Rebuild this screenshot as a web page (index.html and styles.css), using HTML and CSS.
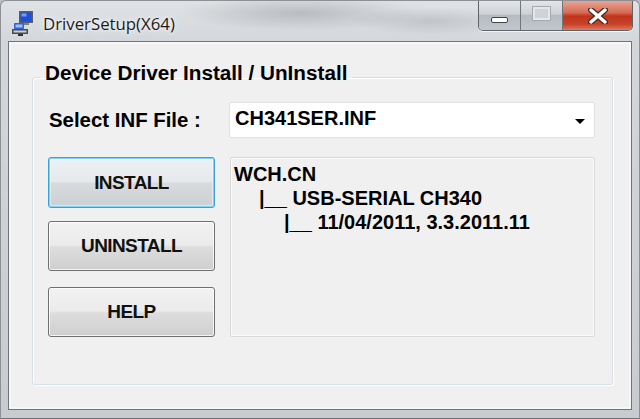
FILE: index.html
```html
<!DOCTYPE html>
<html>
<head>
<meta charset="utf-8">
<title>DriverSetup(X64)</title>
<link rel="stylesheet" href="styles.css">
</head>
<body>
<div class="window">
  <div class="titlebar">
    <svg class="app-icon" width="24" height="26" viewBox="0 0 24 26">
      <rect x="8" y="1" width="14" height="12" fill="#5a5f66"/>
      <rect x="9.5" y="2.5" width="11" height="9" fill="#1f4fd6"/>
      <rect x="10.5" y="3.5" width="5" height="3" fill="#6f9cff"/>
      <rect x="12" y="13" width="6" height="2" fill="#7a7f86"/>
      <rect x="3" y="13" width="10" height="6" rx="1" fill="#2a63d8"/>
      <rect x="4.5" y="14.5" width="7" height="3" fill="#9cc0ff"/>
      <rect x="1" y="19" width="16" height="5" fill="#474b52"/>
      <rect x="2.5" y="20.5" width="13" height="2" fill="#c9ccd1"/>
      <rect x="7" y="24" width="5" height="2" fill="#2d3036"/>
    </svg>
    <span class="title">DriverSetup(X64)</span>
    <div class="caption-buttons">
      <div class="cbtn cmin"><span class="min-glyph"></span></div>
      <div class="cbtn cmax"><span class="max-glyph"></span></div>
      <div class="cbtn cclose">
        <svg width="22" height="16" viewBox="0 0 22 16">
          <path d="M4 2 L18 14 M18 2 L4 14" stroke="#4a2a24" stroke-width="6" stroke-linecap="round"/>
          <path d="M4 2 L18 14 M18 2 L4 14" stroke="#ffffff" stroke-width="3.4" stroke-linecap="round"/>
        </svg>
      </div>
    </div>
  </div>
  <div class="client">
    <fieldset class="group">
      <legend class="group-title">Device Driver Install / UnInstall</legend>
      <div class="inf-row">
        <span class="inf-label">Select INF File :</span>
        <div class="combo">
          <span class="combo-text">CH341SER.INF</span>
          <span class="combo-arrow"></span>
        </div>
      </div>
      <div class="main-row">
        <div class="buttons">
          <div class="btn btn-default">INSTALL</div>
          <div class="btn btn-uninstall">UNINSTALL</div>
          <div class="btn btn-help">HELP</div>
        </div>
        <div class="info">
          <div class="line">WCH.CN</div>
          <div class="line lvl1">|__ USB-SERIAL CH340</div>
          <div class="line lvl2">|__ 11/04/2011, 3.3.2011.11</div>
        </div>
      </div>
    </fieldset>
  </div>
</div>
</body>
</html>
```

FILE: styles.css
```css
html, body {
  margin: 0;
  padding: 0;
  width: 640px;
  height: 419px;
  overflow: hidden;
  background: #b9bec4;
}

.window {
  box-sizing: border-box;
  width: 640px;
  height: 419px;
  padding: 0 7px 8px 7px;
  display: flex;
  flex-direction: column;
  background:
    radial-gradient(ellipse 120px 18px at 300px 12px, rgba(120,125,130,0.35), rgba(120,125,130,0) 100%),
    radial-gradient(ellipse 80px 14px at 430px 20px, rgba(120,125,130,0.25), rgba(120,125,130,0) 100%),
    linear-gradient(180deg, #dfe2e5 0%, #d3d7db 10%, #c8ccd0 100%);
  border: 1px solid #8d9196;
  border-bottom-color: #6d7075;
  border-radius: 6px 6px 0 0;
}

.titlebar {
  height: 40px;
  display: flex;
  align-items: center;
  position: relative;
}

.app-icon {
  margin-left: 3px;
  margin-top: 4px;
  flex: none;
}

.title {
  margin-left: 8px;
  margin-top: 4px;
  font-family: "Open Sans", "Noto Sans", sans-serif;
  font-size: 16.8px;
  color: #1b1b1b;
  text-shadow: 0 0 8px rgba(255,255,255,0.9), 0 0 3px rgba(255,255,255,0.9);
}

.caption-buttons {
  position: absolute;
  top: 0;
  right: -1px;
  display: flex;
  height: 29px;
  border: 1px solid #5f6367;
  border-top: none;
  border-radius: 0 0 5px 5px;
  overflow: hidden;
  box-shadow: 0 1px 0 rgba(255,255,255,0.7);
}

.cbtn {
  height: 29px;
  display: flex;
  align-items: center;
  justify-content: center;
}

.cmin, .cmax {
  width: 41px;
  background: linear-gradient(180deg, #e3e6e9 0%, #cdd1d5 45%, #b6bbc1 50%, #c2c7cc 100%);
  border-right: 1px solid #70757a;
}

.cclose {
  width: 69px;
  background: linear-gradient(180deg, #e7a596 0%, #d76b55 40%, #c0341b 52%, #c8422a 80%, #de7b61 100%);
}

.min-glyph {
  display: block;
  width: 15px;
  height: 4px;
  margin-top: 8px;
  background: #ffffff;
  border: 1px solid #3e4348;
  border-radius: 2px;
}

.max-glyph {
  display: block;
  width: 13px;
  height: 9px;
  border: 2px solid #e4e6e8;
  outline: 1px solid #a6abb0;
  margin-top: -4px;
  background: #cfd3d7;
}

.client {
  flex: 1;
  background: #f0f0f0;
  border: 1px solid #6f747a;
  box-shadow: inset 0 0 0 2px #f7f7f7;
  padding: 23px 0 0 23px;
}

.group {
  box-sizing: border-box;
  width: 581px;
  margin: 0;
  padding: 12px 17px 47px 15px;
  border: 1px solid #d5dfe5;
  border-radius: 3px;
  box-shadow: 1px 1px 0 #ffffff, inset 1px 1px 0 #ffffff;
  font-family: "Liberation Sans", Arial, sans-serif;
  font-weight: bold;
  color: #000;
}

.group-title {
  margin-left: -8px;
  padding: 0 5px 9px 5px;
  font-size: 20.7px;
  line-height: 16px;
}

.inf-row {
  display: flex;
  align-items: center;
  height: 36px;
}

.inf-label {
  width: 180px;
  padding-left: 1px;
  font-size: 20.4px;
}

.combo {
  box-sizing: border-box;
  width: 366px;
  height: 36px;
  display: flex;
  align-items: center;
  justify-content: space-between;
  background: #ffffff;
  border: 1px solid #e1e1e1;
  border-radius: 2px;
  padding: 0 9px 0 5px;
}

.combo-text {
  font-size: 20px;
  margin-top: -3px;
}

.combo-arrow {
  width: 0;
  height: 0;
  border-left: 5px solid transparent;
  border-right: 5px solid transparent;
  border-top: 5px solid #000;
  margin-top: 2px;
}

.main-row {
  display: flex;
  gap: 15px;
  margin-top: 19px;
}

.buttons {
  width: 167px;
  display: flex;
  flex-direction: column;
}

.btn {
  box-sizing: border-box;
  height: 50px;
  display: flex;
  align-items: center;
  justify-content: center;
  border: 1px solid #707070;
  border-radius: 3px;
  background: linear-gradient(180deg, #f2f2f2 0%, #ebebeb 48%, #dddddd 52%, #cfcfcf 100%);
  box-shadow: inset 0 0 0 1px rgba(255,255,255,0.75);
  font-size: 19px;
  letter-spacing: -0.6px;
  color: #111;
}

.btn-default {
  height: 51px;
  border-color: #3c9fd8;
  box-shadow: inset 0 0 0 1px #7fd3f7, inset 0 0 0 2px rgba(255,255,255,0.4);
  background: linear-gradient(180deg, #eef1f3 0%, #e6e9eb 48%, #d8dbdd 52%, #cdd0d2 100%);
}

.btn-uninstall {
  margin-top: 13px;
}

.btn-help {
  margin-top: 16px;
}

.info {
  box-sizing: border-box;
  width: 365px;
  height: 180px;
  background: #f0f0f0;
  border: 1px solid #dadada;
  border-radius: 2px;
  box-shadow: inset 0 0 0 1px #fafafa;
  padding: 4px 0 0 3px;
  font-size: 20px;
  line-height: 24px;
}

.lvl1 {
  padding-left: 25px;
}

.lvl2 {
  padding-left: 50px;
}
```
